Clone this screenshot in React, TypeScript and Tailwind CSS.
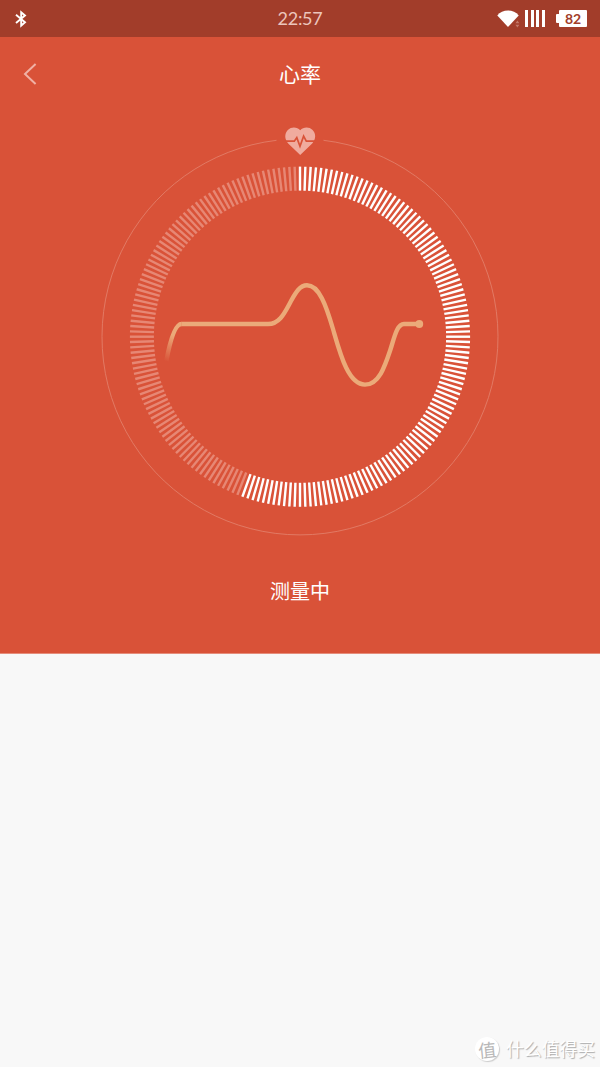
const TICK_COUNT = 200;
const LAST_ACTIVE = 111;
const CX = 300;
const CY = 336.7;

function StatusBar() {
  return (
    <header className="relative flex h-[37px] items-center justify-between bg-[#a23d2a] pl-[15px] pr-[13px]">
      <svg className="h-[18px] w-3" viewBox="0 0 12 18" fill="none" stroke="#fff" strokeWidth="1.9">
        <path d="M1 4.8 10 12.2 6.2 15.6V2.2L10 5.4 1 13" />
      </svg>
      <span className="absolute inset-x-0 top-[5px] text-center font-['Lato',sans-serif] text-[18px] leading-[26px] tracking-[-0.3px] text-[#ecc5bc]">
        22:57
      </span>
      <div className="flex items-center">
        <svg className="h-[18px] w-[23px]" viewBox="0 0 23 18">
          <path d="M.3 5.4C5-1 17-1 21.7 5.4L11 17Z" fill="#fff" />
          <path d="m18.4 13.2 2-2.6 2 2.6zm0 1.6 2 2.6 2-2.6z" fill="#c37768" />
        </svg>
        <div className="ml-[5px] flex gap-[2.6px]">
          {[0, 1, 2, 3].map((i) => (
            <i key={i} className="h-[17px] w-[3px] bg-white" />
          ))}
        </div>
        <div className="ml-[11px] flex items-center">
          <i className="h-[9px] w-[3px] rounded-l-[1px] bg-white" />
          <span className="flex h-[17px] w-7 items-center justify-center rounded-[1px] bg-white font-['Lato',sans-serif] text-[14px] font-bold leading-none text-[#a23d2a]">
            82
          </span>
        </div>
      </div>
    </header>
  );
}

function HeartRateDial() {
  return (
    <svg className="mx-auto mt-3 h-[412px] w-[400px]" viewBox="100 124 400 412" fill="none">
      <defs>
        <linearGradient id="trace" gradientUnits="userSpaceOnUse" x1="165" y1="361" x2="175" y2="336">
          <stop stopColor="#ebaa79" stopOpacity="0" />
          <stop offset="1" stopColor="#ebaa79" />
        </linearGradient>
      </defs>
      <path d="M323.5 140.3A198 198 0 1 1 276.5 140.3" stroke="#e27e69" strokeWidth=".9" />
      {Array.from({ length: TICK_COUNT }, (_, i) => (
        <path
          key={i}
          d="M300 166.6V190.6"
          stroke={i <= LAST_ACTIVE ? "#fff" : "#e78774"}
          strokeWidth="2.4"
          transform={`rotate(${(i * 360) / TICK_COUNT} ${CX} ${CY})`}
        />
      ))}
      <path
        d="M300.2 155 288.2 143.5C284.4 139.5 284.4 133.5 287.8 130.1C291.6 126.4 297.2 127 300.2 130.3C303.3 127 309 126.4 312.6 130.1C316.1 133.5 316.1 139.5 312.2 143.5Z"
        fill="#f0ab9e"
      />
      <path d="M285 141.2H294.3L296.8 137.6L300 146.2L303.6 136.2L306.3 141.2H315.5" stroke="#d95238" strokeWidth="1.7" />
      <path d="M166.3 361C169.5 344 174.5 324 181.5 324" stroke="url(#trace)" strokeWidth="4.4" />
      <path
        d="M181.3 324H268C280 324 285 312 291 301C296 292 300 285.3 307 285.3C319 285.3 326 305 333 329C340 353 348 384.6 365 384.6C379 384.6 385 366 390.3 350C394.5 337 397 324 404 324H419"
        stroke="#ebaa79"
        strokeWidth="4.4"
      />
      <circle cx="419.3" cy="324" r="3.9" fill="#ebaa79" />
    </svg>
  );
}

export default function App() {
  return (
    <div className="flex h-[1067px] w-[600px] flex-col overflow-hidden bg-[#f8f8f8] font-['Noto_Sans_CJK_SC',sans-serif]">
      <StatusBar />
      <main className="h-[617px] shrink-0 border-b border-[#e58d7b] bg-[#d95238] text-white">
        <div className="relative flex h-[75px] items-center justify-center">
          <svg className="absolute left-[23px] top-[26px] h-[22px] w-[14px]" viewBox="0 0 14 22" fill="none" stroke="#f0b1a5" strokeWidth="2">
            <path d="M12.6 1 2 11 12.6 21" />
          </svg>
          <h1 className="pb-0.5 text-[21px] leading-none">心率</h1>
        </div>
        <HeartRateDial />
        <p className="mt-[45px] text-center text-[20px] leading-5">测量中</p>
      </main>
      <footer className="mt-auto flex h-9 items-center justify-end pr-[5px]">
        <span className="mr-[7px] flex size-6 items-center justify-center rounded-full bg-white shadow-[1px_1px_1px_#ccc]">
          <span className="-rotate-6 text-[18px] leading-none text-[#b8b8b8]">值</span>
        </span>
        <span className="text-[17.8px] leading-none text-white [text-shadow:1px_1px_1px_#aaa]">什么值得买</span>
      </footer>
    </div>
  );
}
